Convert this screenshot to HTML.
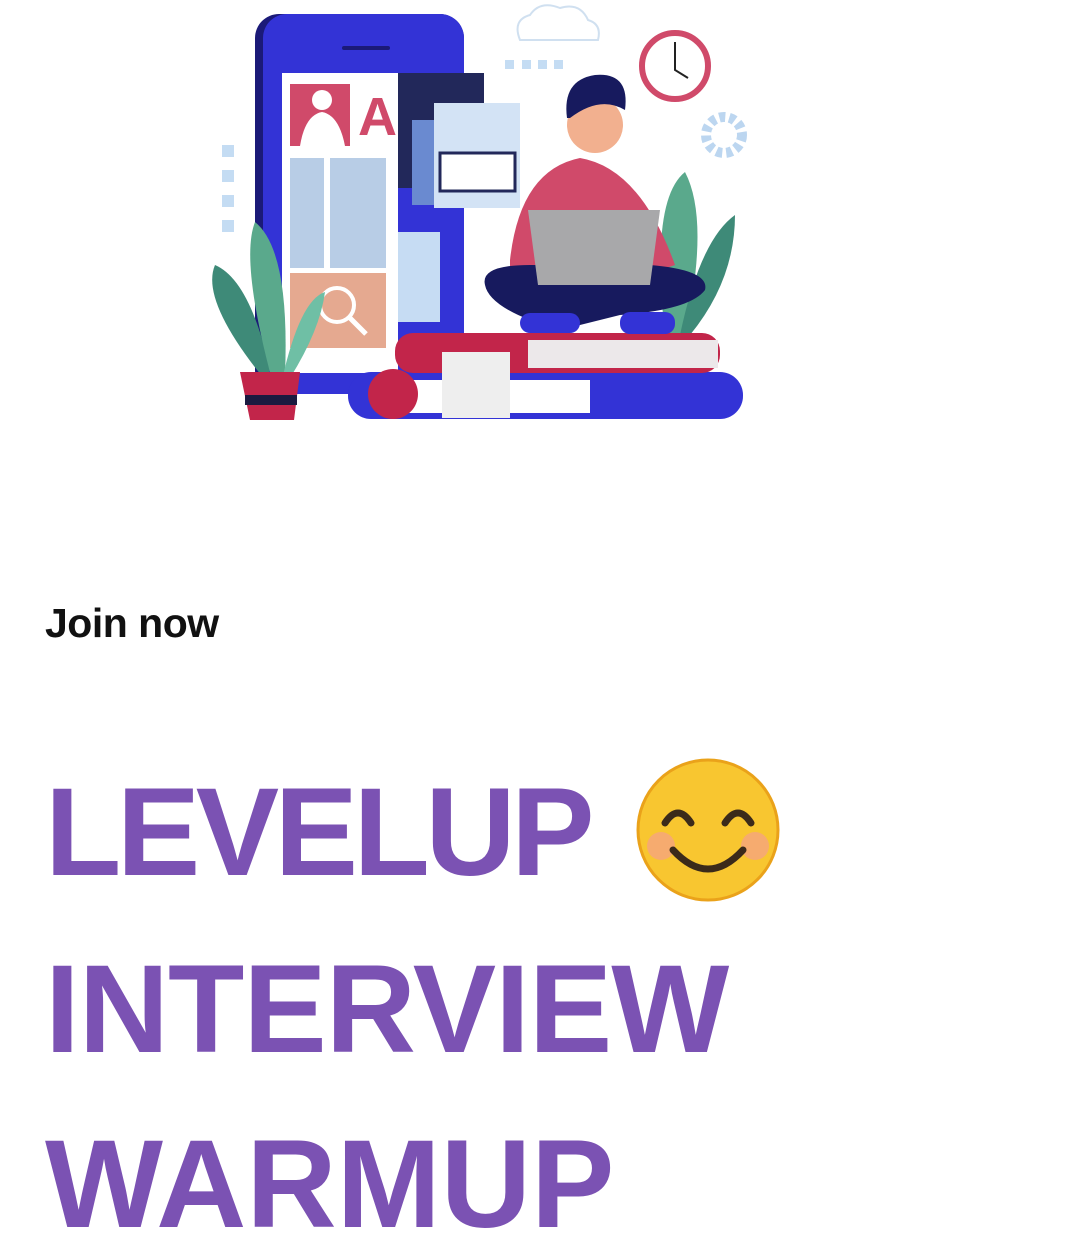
<!DOCTYPE html>
<html><head><meta charset="utf-8"><style>
html,body{margin:0;padding:0;background:#fff;width:1080px;height:1238px;overflow:hidden;position:relative;font-family:"Liberation Sans",sans-serif}
.join{position:absolute;left:45px;top:600px;font-size:41px;font-weight:bold;color:#111;letter-spacing:-0.5px}
.big{position:absolute;left:45px;font-size:125px;font-weight:bold;color:#7b52b3;line-height:1;white-space:nowrap}
</style></head><body>
<svg width="1080" height="440" style="position:absolute;left:0;top:0">
<rect x="255" y="14" width="209" height="380" rx="24" fill="#1b1a78"/>
<rect x="263" y="14" width="201" height="380" rx="24" fill="#3333d6"/>
<rect x="342" y="46" width="48" height="4" rx="2" fill="#1b1a78"/>
<rect x="282" y="73" width="116" height="300" fill="#fff"/>
<rect x="290" y="84" width="60" height="62" fill="#d04a6a"/>
<circle cx="322" cy="100" r="10" fill="#fff"/><path d="M300 146 Q305 115 322 112 Q339 115 345 146Z" fill="#fff"/>
<text x="358" y="135" font-size="54" font-weight="bold" fill="#d04a6a" font-family="Liberation Sans">A</text>
<g fill="#b8cde6"><rect x="290" y="158" width="34" height="110"/><rect x="330" y="158" width="56" height="110"/></g>
<rect x="290" y="273" width="96" height="75" fill="#e5a990"/>
<circle cx="337" cy="305" r="17" fill="none" stroke="#fff" stroke-width="4"/><line x1="349" y1="317" x2="366" y2="334" stroke="#fff" stroke-width="5"/>
<rect x="398" y="73" width="86" height="115" fill="#22285a"/>
<rect x="412" y="120" width="30" height="85" fill="#6a8ad0"/>
<rect x="434" y="103" width="86" height="105" fill="#d3e3f5"/>
<rect x="440" y="153" width="75" height="38" fill="#fff" stroke="#22285a" stroke-width="3"/>
<rect x="398" y="232" width="42" height="90" fill="#c6dcf3"/>
<g fill="#c4dcf3"><rect x="222" y="145" width="12" height="12"/><rect x="222" y="170" width="12" height="12"/><rect x="222" y="195" width="12" height="12"/><rect x="222" y="220" width="12" height="12"/>
<rect x="505" y="60" width="9" height="9"/><rect x="522" y="60" width="9" height="9"/><rect x="538" y="60" width="9" height="9"/><rect x="554" y="60" width="9" height="9"/></g>
<path d="M520 40 Q512 20 530 15 Q540 0 560 8 Q580 2 588 20 Q602 24 598 40Z" fill="none" stroke="#d0e0f0" stroke-width="2"/>
<circle cx="675" cy="66" r="33" fill="#fff" stroke="#d04a6a" stroke-width="6"/><path d="M675 42 V70 L688 78" stroke="#222" stroke-width="2" fill="none"/>
<circle cx="724" cy="135" r="18" fill="none" stroke="#bcd6f0" stroke-width="10" stroke-dasharray="6 4"/>
<path d="M265 380 Q200 300 215 265 Q250 280 270 370Z" fill="#3e8a78"/>
<path d="M272 380 Q240 260 255 222 Q290 250 285 375Z" fill="#5aa98c"/>
<path d="M282 380 Q300 300 325 292 Q320 330 290 378Z" fill="#6fbfa5"/>
<path d="M240 372 H300 L294 420 H250Z" fill="#c2254a"/><rect x="245" y="395" width="52" height="10" fill="#1b1a40"/>
<path d="M665 335 Q650 200 685 172 Q710 220 685 335Z" fill="#5aa98c"/>
<path d="M680 335 Q700 240 735 215 Q735 280 690 335Z" fill="#3e8a78"/>
<rect x="348" y="372" width="395" height="47" rx="23" fill="#3333d6"/>
<rect x="400" y="380" width="190" height="33" fill="#fff"/>
<rect x="395" y="333" width="325" height="40" rx="18" fill="#c2254a"/>
<rect x="528" y="340" width="190" height="28" fill="#ece8ea"/>
<circle cx="393" cy="394" r="25" fill="#c2254a"/>
<rect x="442" y="352" width="68" height="66" fill="#eee"/>
<path d="M510 260 Q520 170 580 158 Q640 168 675 265 L660 270 L510 270Z" fill="#d04a6a"/>
<path d="M485 285 Q480 265 530 265 L650 265 Q710 270 705 290 Q690 310 620 315 L560 330 Q490 310 485 285Z" fill="#171a5e"/>
<rect x="520" y="313" width="60" height="20" rx="10" fill="#3333d6"/><rect x="620" y="312" width="55" height="22" rx="10" fill="#3333d6"/>
<path d="M528 210 H660 L650 285 H538Z" fill="#a8a8aa"/>
<circle cx="595" cy="125" r="28" fill="#f2b08f"/>
<path d="M567 118 Q562 80 595 75 Q630 72 625 110 Q600 95 570 118Z" fill="#171a5e"/>
</svg>
<div class="join">Join now</div>
<div class="big" style="top:770px;letter-spacing:-4.5px">LEVELUP</div>
<svg width="150" height="150" style="position:absolute;left:633px;top:758px"><circle cx="75" cy="72" r="70" fill="#f8c630"/><circle cx="75" cy="72" r="70" fill="none" stroke="#eaa21a" stroke-width="3"/><circle cx="28" cy="88" r="14" fill="#f59a9a" opacity=".6"/><circle cx="122" cy="88" r="14" fill="#f59a9a" opacity=".6"/><path d="M32 65 Q45 45 58 65 M92 65 Q105 45 118 65" stroke="#3b2a1a" stroke-width="7" fill="none" stroke-linecap="round"/><path d="M40 92 Q75 130 110 92" stroke="#3b2a1a" stroke-width="7" fill="none" stroke-linecap="round"/></svg>
<div class="big" style="top:947px;letter-spacing:-1px">INTERVIEW</div>
<div class="big" style="top:1122px;letter-spacing:0px">WARMUP</div>
</body></html>
